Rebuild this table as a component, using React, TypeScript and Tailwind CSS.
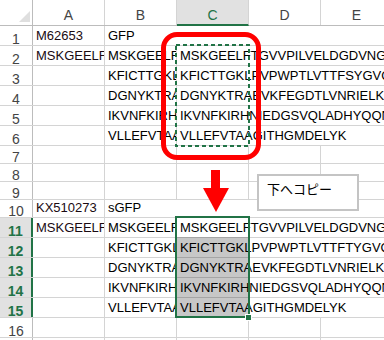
import React from "react";

const GRID = "border-[#d4d4d4]";

const L1 = "MSKGEELFTGVVPILVELDGDVNGH";
const L2 = "KFICTTGKLPVPWPTLVTTFSYGVQ";
const L2s = "KFICTTGKLPVPWPTLVTTFTYGVQ";
const L3 = "DGNYKTRAEVKFEGDTLVNRIELKG";
const L4 = "IKVNFKIRHNIEDGSVQLADHYQQN";
const L5 = "VLLEFVTAAGITHGMDELYK";
const FULL = "MSKGEELFTG";
const short = (s: string) => s.slice(0, 10);

type Row = { n: number; h: number; t: string[]; hl?: boolean };

const rows: Row[] = [
  { n: 1, h: 20, t: ["M62653", "GFP", "", "", ""] },
  { n: 2, h: 20, t: [FULL, short(L1), L1, "", ""] },
  { n: 3, h: 20, t: ["", short(L2), L2, "", ""] },
  { n: 4, h: 20, t: ["", short(L3), L3, "", ""] },
  { n: 5, h: 20, t: ["", short(L4), L4, "", ""] },
  { n: 6, h: 20, t: ["", short(L5), L5, "", ""] },
  { n: 7, h: 18, t: ["", "", "", "", ""] },
  { n: 8, h: 18, t: ["", "", "", "", ""] },
  { n: 9, h: 18, t: ["", "", "", "", ""] },
  { n: 10, h: 18, t: ["KX510273", "sGFP", "", "", ""] },
  { n: 11, h: 20, t: [FULL, short(L1), L1, "", ""], hl: true },
  { n: 12, h: 20, t: ["", short(L2s), L2s, "", ""], hl: true },
  { n: 13, h: 20, t: ["", short(L3), L3, "", ""], hl: true },
  { n: 14, h: 20, t: ["", short(L4), L4, "", ""], hl: true },
  { n: 15, h: 20, t: ["", short(L5), L5, "", ""], hl: true },
  { n: 16, h: 20, t: ["", "", "", "", ""] },
  { n: 17, h: 20, t: ["", "", "", "", ""] },
];

function cellsOf(t: string[]) {
  const out: { text: string; span: number; col: number }[] = [];
  let i = 0;
  while (i < t.length) {
    let span = 1;
    if (t[i]) {
      while (i + span < t.length && !t[i + span]) span++;
    }
    out.push({ text: t[i], span, col: i });
    i += span;
  }
  return out;
}

function GridRow({ r }: { r: Row }) {
  const cells = cellsOf(r.t);
  return (
    <div
      className={`flex border-b ${GRID} shrink-0`}
      style={{ height: r.h }}
    >
      <div
        className={
          r.hl
            ? "w-[33px] shrink-0 flex items-end justify-center bg-[#e1e1e1] border-r-2 border-[#217346] text-[#217346] font-bold text-[14px] leading-none"
            : "w-[33px] shrink-0 flex items-end justify-center border-r border-[#bcbcbc] text-[#444444] text-[14px] leading-none"
        }
      >
        <span className="mb-[-1px]">{r.n}</span>
      </div>
      {cells.map((c) => (
        <div
          key={c.col}
          className={`shrink-0 flex items-end pb-[3px] pl-[3px] overflow-hidden whitespace-nowrap border-r ${GRID} text-[13px] leading-none ${
            c.col === 0 ? "text-[#1a0a12]" : "text-black"
          }`}
          style={{ width: c.span * 72 }}
        >
          {c.text}
        </div>
      ))}
    </div>
  );
}

export default function App() {
  const cols = ["A", "B", "C", "D", "E"];
  return (
    <div className="relative w-[384px] h-[340px] overflow-hidden bg-white font-['Liberation_Sans',Arial,sans-serif]">
      <div className="flex flex-col w-[420px]">
        {/* header */}
        <div className="flex h-[26px] shrink-0 border-b border-[#bcbcbc]">
          <div className="w-[33px] shrink-0 border-r border-[#bcbcbc] relative">
            <svg
              className="absolute right-[2px] bottom-[3px]"
              width="11"
              height="11"
              viewBox="0 0 11 11"
            >
              <polygon points="11,0 11,11 0,11" fill="#dfdfdf" />
            </svg>
          </div>
          {cols.map((c) => (
            <div
              key={c}
              className={
                c === "C"
                  ? "w-[72px] shrink-0 flex items-end justify-center pb-[2px] bg-[#e1e1e1] border-b-2 border-[#217346] border-r border-r-[#d4d4d4] text-[#217346] text-[14px] leading-none mb-[-1px]"
                  : "w-[72px] shrink-0 flex items-end justify-center pb-[3px] border-r border-[#d4d4d4] text-[#444444] text-[14px] leading-none"
              }
            >
              {c}
            </div>
          ))}
        </div>
        {rows.map((r) => (
          <GridRow key={r.n} r={r} />
        ))}
      </div>

      {/* selection fill C12:C15 */}
      <div className="absolute left-[177px] top-[237px] w-[72px] h-[80px] bg-black/[0.22] pointer-events-none" />
      {/* selection border C11:C15 */}
      <div className="absolute left-[175px] top-[216px] w-[75px] h-[102px] border-2 border-[#217346]" />
      {/* fill handle */}
      <div className="absolute left-[245px] top-[314px] w-[7px] h-[7px] bg-[#217346] border border-white" />

      {/* dashed copy marquee */}
      <svg
        className="absolute left-[174px] top-[43px]"
        width="78"
        height="105"
        viewBox="0 0 78 105"
      >
        <rect
          x="2"
          y="2"
          width="73"
          height="101"
          fill="none"
          stroke="#217346"
          strokeWidth="2"
          strokeDasharray="4 3"
        />
      </svg>

      {/* red rounded rectangle */}
      <div className="absolute left-[161px] top-[32px] w-[100px] h-[128px] border-[5px] border-[#ff0000] rounded-[16px]" />

      {/* red arrow */}
      <svg
        className="absolute left-[203px] top-[170px]"
        width="26"
        height="42"
        viewBox="0 0 26 42"
      >
        <rect x="8" y="0" width="9" height="19" fill="#ff0000" />
        <polygon points="0,18 26,18 13,42" fill="#ff0000" />
      </svg>

      {/* text box */}
      <div className="absolute left-[257px] top-[174px] w-[102px] h-[37px] bg-white border-2 border-[#c4c4c4] pl-[8px] pt-[6px] text-[13px] leading-none text-black font-['Noto_Sans_CJK_JP',sans-serif]">
        下へコピー
      </div>
    </div>
  );
}
